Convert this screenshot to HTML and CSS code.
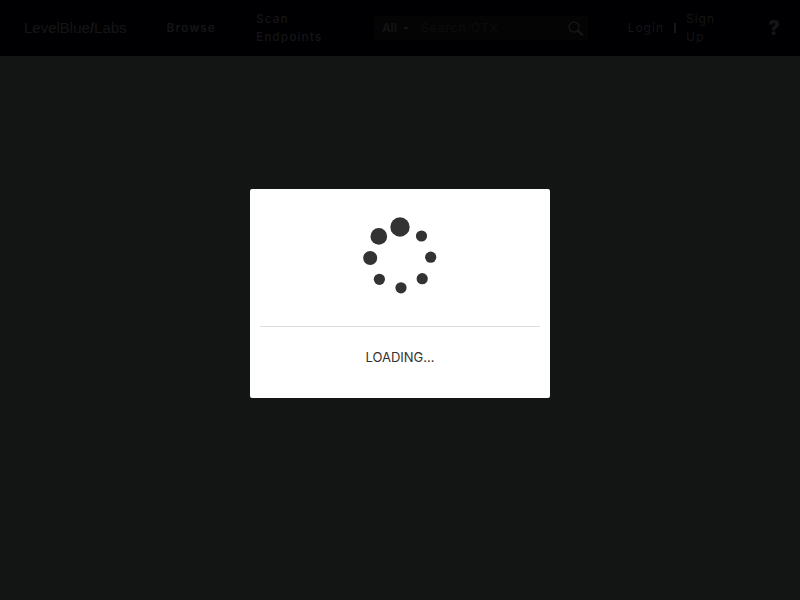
FILE: index.html
```html
<!DOCTYPE html>
<html lang="en">
<head>
    <meta charset="UTF-8">
    <meta name="viewport" content="width=device-width, initial-scale=1.0">
    <title>LevelBlue/Labs</title>
    <link rel="stylesheet" href="styles.css">
</head>
<body>
    <header class="navbar">
        <a class="logo" href="#">LevelBlue<b>/</b>Labs</a>
        <nav class="menu">
            <a class="browse" href="#">Browse</a>
            <a class="scan" href="#">Scan Endpoints</a>
        </nav>
        <form class="search" role="search">
            <button class="filter" type="button">All <span class="caret"></span></button>
            <input type="text" placeholder="Search OTX" aria-label="Search OTX">
            <button class="search-btn" type="submit" aria-label="Search">
                <svg width="16" height="16" viewBox="0 0 16 16" fill="none" stroke="currentColor">
                    <circle cx="6" cy="7" r="5" stroke-width="1.5"/>
                    <path d="M9.5 10.5L15 15.5" stroke-width="2.5"/>
                </svg>
            </button>
        </form>
        <div class="account">
            <a href="#">Login</a>
            <span class="divider"></span>
            <a class="signup" href="#">Sign Up</a>
        </div>
        <a class="help" href="#" aria-label="Help">?</a>
    </header>

    <main class="overlay">
        <div class="modal" role="dialog" aria-label="Loading">
            <div class="modal-header">
                <svg class="spinner" width="76" height="78" viewBox="0 0 76 78" fill="#333">
                    <circle cx="38" cy="10" r="9.7"/>
                    <circle cx="59.5" cy="19" r="5.6"/>
                    <circle cx="68.7" cy="40.2" r="5.6"/>
                    <circle cx="60.2" cy="61.7" r="5.6"/>
                    <circle cx="39" cy="70.8" r="5.6"/>
                    <circle cx="17.4" cy="62.3" r="5.6"/>
                    <circle cx="8.2" cy="41" r="7"/>
                    <circle cx="16.8" cy="19.4" r="8.3"/>
                </svg>
            </div>
            <p class="modal-text">LOADING...</p>
        </div>
    </main>
</body>
</html>
```

FILE: styles.css
```css
* {
    box-sizing: border-box;
}

body {
    display: flex;
    flex-direction: column;
    min-height: 100vh;
    margin: 0;
    background-color: #131514;
    font-family: "Inter", "Liberation Sans", sans-serif;
    font-size: 12px;
    line-height: 18px;
    color: #151515;
}

a {
    color: inherit;
    text-decoration: none;
}

button,
input {
    padding: 0;
    border: none;
    background: none;
    font: inherit;
    color: inherit;
}

/* Top bar */
.navbar {
    display: flex;
    align-items: center;
    gap: 40px;
    min-height: 56px;
    padding: 0 20px 0 24px;
    background-color: #000003;
    letter-spacing: 1px;
}

.logo {
    font-family: "Liberation Sans", sans-serif;
    font-size: 15px;
    letter-spacing: normal;
}

.menu {
    display: flex;
    align-items: center;
    gap: 40px;
    font-weight: 600;
}

.scan {
    width: 78px;
    font-weight: 500;
}

.search {
    display: flex;
    align-items: center;
    flex: 1;
    min-width: 0;
    height: 24px;
    padding: 0 4px 0 8px;
    background-color: #040404;
}

.filter {
    display: flex;
    align-items: center;
    gap: 6px;
    font-weight: 600;
}

.caret {
    border: 3px solid transparent;
    border-top-color: currentColor;
    border-bottom: none;
}

.search input {
    flex: 1;
    min-width: 0;
    padding-left: 12px;
    letter-spacing: 1px;
}

.search input::placeholder {
    color: #0c0c0c;
    opacity: 1;
}

.search-btn {
    display: flex;
}

.account {
    display: flex;
    align-items: center;
    gap: 10px;
}

.divider {
    width: 2px;
    height: 10px;
    background-color: #151515;
}

.signup {
    width: 42px;
}

.help {
    font-size: 20px;
    font-weight: 900;
    letter-spacing: normal;
}

/* Loading dialog */
.overlay {
    display: flex;
    flex: 1;
    justify-content: center;
    align-items: flex-start;
    padding-top: 133px;
}

.modal {
    width: 300px;
    padding: 0 10px;
    border-radius: 2px;
    background-color: #fff;
    color: #333;
    text-align: center;
}

.modal-header {
    padding: 28px 0 31px;
    border-bottom: 1px solid #ddd;
}

.spinner {
    display: block;
    margin: 0 auto;
}

.modal-text {
    margin: 0;
    padding: 20px 0 31px;
    font-size: 13px;
    line-height: 20px;
}
```
